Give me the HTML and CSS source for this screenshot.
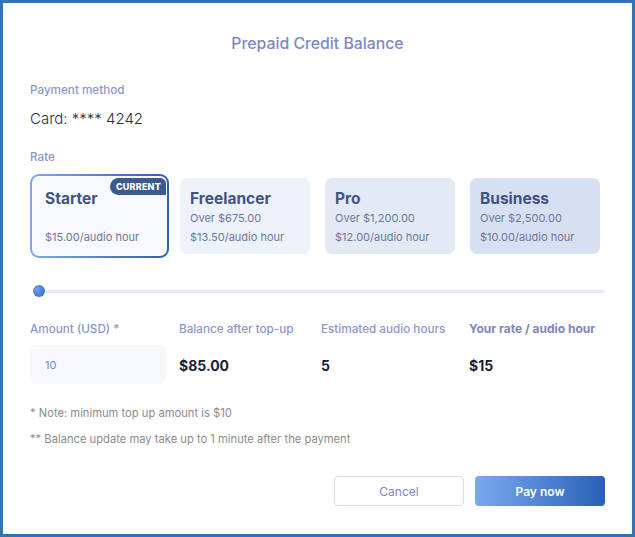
FILE: index.html
```html
<!DOCTYPE html>
<html>
<head>
<meta charset="utf-8">
<link rel="stylesheet" href="styles.css">
</head>
<body>
<div class="frame">
  <h1 class="title">Prepaid Credit Balance</h1>
  <div class="label first">Payment method</div>
  <div class="card-num">Card: **** 4242</div>
  <div class="label rate">Rate</div>
  <div class="plans">
    <div class="plan active">
      <span class="badge">CURRENT</span>
      <div class="plan-name">Starter</div>
      <div class="plan-line">&nbsp;</div>
      <div class="plan-line">$15.00/audio hour</div>
    </div>
    <div class="plan p2">
      <div class="plan-name">Freelancer</div>
      <div class="plan-line">Over $675.00</div>
      <div class="plan-line">$13.50/audio hour</div>
    </div>
    <div class="plan p3">
      <div class="plan-name">Pro</div>
      <div class="plan-line">Over $1,200.00</div>
      <div class="plan-line">$12.00/audio hour</div>
    </div>
    <div class="plan p4">
      <div class="plan-name">Business</div>
      <div class="plan-line">Over $2,500.00</div>
      <div class="plan-line">$10.00/audio hour</div>
    </div>
  </div>
  <div class="slider">
    <span class="thumb"></span>
    <span class="track"></span>
  </div>
  <div class="stats">
    <div class="stat">
      <div class="label">Amount (USD) *</div>
      <div class="input">10</div>
    </div>
    <div class="stat">
      <div class="label">Balance after top-up</div>
      <div class="value">$85.00</div>
    </div>
    <div class="stat">
      <div class="label">Estimated audio hours</div>
      <div class="value">5</div>
    </div>
    <div class="stat">
      <div class="label strong">Your rate / audio hour</div>
      <div class="value">$15</div>
    </div>
  </div>
  <p class="note">* Note: minimum top up amount is $10</p>
  <p class="note second">** Balance update may take up to 1 minute after the payment</p>
  <div class="actions">
    <button class="btn cancel">Cancel</button>
    <button class="btn pay">Pay now</button>
  </div>
</div>
</body>
</html>
```
FILE: styles.css
```css
* { box-sizing: border-box; }
html, body { margin: 0; padding: 0; background: #fff; }
body { font-family: Inter, "Noto Sans", sans-serif; }
.frame {
  width: 635px;
  height: 537px;
  border: 3px solid #2f75b5;
  padding: 31px 27px 0 27px;
  background: #fff;
}
.title {
  margin: 0;
  font-size: 15.8px;
  line-height: 20px;
  font-weight: 500;
  color: #7d89c3;
  text-align: center;
}
.label {
  font-size: 11.7px;
  line-height: 16px;
  color: #8d96c8;
  font-weight: 500;
}
.label.first { margin-top: 28px; }
.label.rate { margin-top: 20px; }
.label.strong { font-weight: 700; font-size: 12px; color: #7d86bd; }
.card-num {
  margin-top: 11px;
  font-size: 15px;
  line-height: 20px;
  font-weight: 300;
  color: #2b303c;
}
.plans {
  margin-top: 13px;
  display: flex;
  align-items: flex-start;
  gap: 15px;
  padding-left: 5px;
}
.plan {
  position: relative;
  width: 130px;
  height: 76px;
  border-radius: 7px;
  padding: 11px 10px 7px;
}
.plan.active {
  width: 139px;
  height: 84px;
  margin: -4px -4px -4px -5px;
  padding: 13px 13px 7px 13px;
  border: 2px solid transparent;
  border-radius: 9px;
  background: linear-gradient(#f7f9fd, #f7f9fd) padding-box,
              linear-gradient(90deg, #80aaed, #2b5fb5) border-box;
}
.plan.p2 { background: #eef2fa; }
.plan.p3 { background: #e3e9f5; }
.plan.p4 { background: #d7dff2; }
.badge {
  position: absolute;
  top: 2px;
  right: 1px;
  height: 17px;
  padding: 0 5px 0 6px;
  background: #3e5a8c;
  color: #fff;
  font-size: 9px;
  font-weight: 800;
  line-height: 17px;
  letter-spacing: 0.2px;
  border-radius: 9px 6px 0 9px;
}
.plan-name {
  font-size: 15.5px;
  line-height: 20px;
  font-weight: 700;
  color: #3f5486;
}
.plan-line {
  font-size: 11px;
  line-height: 19px;
  color: #6d789e;
}
.slider {
  margin-top: 31px;
  display: flex;
  align-items: center;
  height: 12px;
  padding-left: 3px;
}
.thumb {
  width: 12px;
  height: 12px;
  border-radius: 50%;
  background: radial-gradient(circle at 35% 35%, #6f9ff0, #2c62c0);
  flex: none;
}
.track {
  flex: 1;
  height: 3px;
  background: #e3e9f5;
  border-radius: 2px;
}
.stats {
  margin-top: 24px;
  display: grid;
  grid-template-columns: 149px 142px 148px 1fr;
}
.stat .label { margin-bottom: 8px; white-space: nowrap; }
.input {
  width: 136px;
  height: 39px;
  border-radius: 5px;
  background: #f6f8fc;
  padding-left: 15px;
  display: flex;
  align-items: center;
  font-size: 11px;
  color: #7c86c3;
}
.value {
  height: 40px;
  padding-top: 1px;
  display: flex;
  align-items: center;
  font-size: 14px;
  font-weight: 700;
  color: #1c2131;
}
.note {
  margin: 20px 0 0;
  font-size: 11.2px;
  line-height: 16px;
  color: #8c8c8c;
}
.note.second { margin-top: 10px; }
.actions {
  margin-top: 29px;
  display: flex;
  justify-content: flex-end;
  gap: 11px;
}
.btn {
  width: 130px;
  height: 30px;
  border-radius: 4px;
  font-family: Inter, "Noto Sans", sans-serif;
  font-size: 12px;
  cursor: pointer;
}
.cancel {
  background: #fff;
  border: 1px solid #d6ddf1;
  color: #7d87c2;
}
.pay {
  border: none;
  background: linear-gradient(90deg, #7aa9ef, #2a61b7);
  color: #fff;
  font-weight: 600;
}
```
